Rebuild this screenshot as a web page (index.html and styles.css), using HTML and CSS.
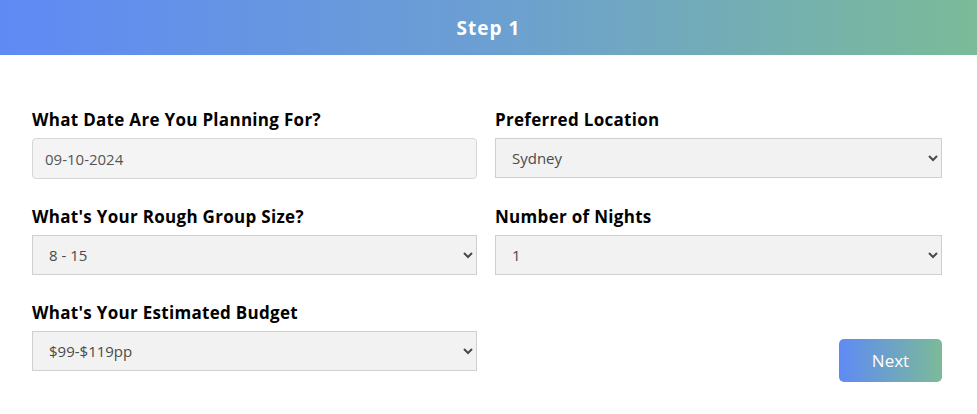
FILE: index.html
```html
<!DOCTYPE html>
<html>
<head>
<meta charset="utf-8">
<link rel="stylesheet" href="styles.css">
</head>
<body>
<header class="step-header">Step 1</header>
<form class="step-form">
  <div class="field">
    <label class="field-label">What Date Are You Planning For?</label>
    <input class="text-input" type="text" value="09-10-2024">
  </div>
  <div class="field">
    <label class="field-label">Preferred Location</label>
    <select class="select-input"><option>Sydney</option></select>
  </div>
  <div class="field">
    <label class="field-label">What's Your Rough Group Size?</label>
    <select class="select-input"><option>8 - 15</option></select>
  </div>
  <div class="field">
    <label class="field-label">Number of Nights</label>
    <select class="select-input"><option>1</option></select>
  </div>
  <div class="field">
    <label class="field-label">What's Your Estimated Budget</label>
    <select class="select-input"><option>$99-$119pp</option></select>
  </div>
  <div class="actions">
    <button type="button" class="next-btn">Next</button>
  </div>
</form>
</body>
</html>
```
FILE: styles.css
```css
* { box-sizing: border-box; }
html, body { margin: 0; padding: 0; background: #fff; }
body { font-family: "Open Sans", "Noto Sans", sans-serif; color: #000; }

.step-header {
  height: 55px;
  display: flex;
  align-items: center;
  justify-content: center;
  background: linear-gradient(90deg, #5f8af5 0%, #6c9fd2 50%, #7bbb98 100%);
  color: #fff;
  font-weight: 700;
  font-size: 19px;
  letter-spacing: 1px;
  padding-top: 1px;
}

.step-form {
  display: grid;
  grid-template-columns: 445px 447px;
  column-gap: 18px;
  row-gap: 25px;
  padding: 52px 35px 0 32px;
}

.field { display: flex; flex-direction: column; }

.field-label {
  font-weight: 700;
  font-size: 17px;
  letter-spacing: 0.3px;
  line-height: 24px;
  padding-top: 1px;
  margin-bottom: 6px;
  color: #000;
}

.text-input {
  height: 41px;
  border: 1px solid #d6d6d6;
  border-radius: 4px;
  background: #f4f4f4;
  padding: 0 12px;
  font-family: inherit;
  font-size: 15px;
  color: #555;
  outline: none;
}

.select-input {
  height: 40px;
  border: 1px solid #cfcfcf;
  border-radius: 0;
  background: #f2f2f2;
  padding: 0 12px;
  font-family: inherit;
  font-size: 15px;
  color: #4a4a4a;
  outline: none;
}

.actions {
  display: flex;
  justify-content: flex-end;
  align-items: flex-start;
  padding-top: 39px;
}

.next-btn {
  width: 103px;
  height: 43px;
  border: none;
  border-radius: 5px;
  background: linear-gradient(90deg, #5f8af5 0%, #7bbb98 100%);
  color: #fff;
  font-family: inherit;
  font-size: 17px;
  font-weight: 500;
}
```
